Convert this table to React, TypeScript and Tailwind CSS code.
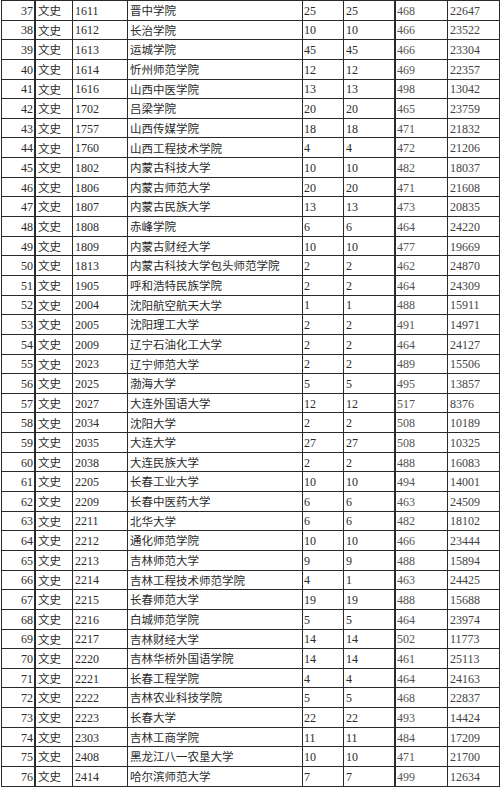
const rows: [number, string, string, string, string, string][] = [
  [37, "1611", "晋中学院", "25", "25", "468", "22647"],
  [38, "1612", "长治学院", "10", "10", "466", "23522"],
  [39, "1613", "运城学院", "45", "45", "466", "23304"],
  [40, "1614", "忻州师范学院", "12", "12", "469", "22357"],
  [41, "1616", "山西中医学院", "13", "13", "498", "13042"],
  [42, "1702", "吕梁学院", "20", "20", "465", "23759"],
  [43, "1757", "山西传媒学院", "18", "18", "471", "21832"],
  [44, "1760", "山西工程技术学院", "4", "4", "472", "21206"],
  [45, "1802", "内蒙古科技大学", "10", "10", "482", "18037"],
  [46, "1806", "内蒙古师范大学", "20", "20", "471", "21608"],
  [47, "1807", "内蒙古民族大学", "13", "13", "473", "20835"],
  [48, "1808", "赤峰学院", "6", "6", "464", "24220"],
  [49, "1809", "内蒙古财经大学", "10", "10", "477", "19669"],
  [50, "1813", "内蒙古科技大学包头师范学院", "2", "2", "462", "24870"],
  [51, "1905", "呼和浩特民族学院", "2", "2", "464", "24309"],
  [52, "2004", "沈阳航空航天大学", "1", "1", "488", "15911"],
  [53, "2005", "沈阳理工大学", "2", "2", "491", "14971"],
  [54, "2009", "辽宁石油化工大学", "2", "2", "464", "24127"],
  [55, "2023", "辽宁师范大学", "2", "2", "489", "15506"],
  [56, "2025", "渤海大学", "5", "5", "495", "13857"],
  [57, "2027", "大连外国语大学", "12", "12", "517", "8376"],
  [58, "2034", "沈阳大学", "2", "2", "508", "10189"],
  [59, "2035", "大连大学", "27", "27", "508", "10325"],
  [60, "2038", "大连民族大学", "2", "2", "488", "16083"],
  [61, "2205", "长春工业大学", "10", "10", "494", "14001"],
  [62, "2209", "长春中医药大学", "6", "6", "463", "24509"],
  [63, "2211", "北华大学", "6", "6", "482", "18102"],
  [64, "2212", "通化师范学院", "10", "10", "466", "23444"],
  [65, "2213", "吉林师范大学", "9", "9", "488", "15894"],
  [66, "2214", "吉林工程技术师范学院", "4", "1", "463", "24425"],
  [67, "2215", "长春师范大学", "19", "19", "488", "15688"],
  [68, "2216", "白城师范学院", "5", "5", "464", "23974"],
  [69, "2217", "吉林财经大学", "14", "14", "502", "11773"],
  [70, "2220", "吉林华桥外国语学院", "14", "14", "461", "25113"],
  [71, "2221", "长春工程学院", "4", "4", "464", "24163"],
  [72, "2222", "吉林农业科技学院", "5", "5", "468", "22837"],
  [73, "2223", "长春大学", "22", "22", "493", "14424"],
  [74, "2303", "吉林工商学院", "11", "11", "484", "17209"],
  [75, "2408", "黑龙江八一农垦大学", "10", "10", "471", "21700"],
  [76, "2414", "哈尔滨师范大学", "7", "7", "499", "12634"],
] as any;

const num = "font-['Liberation_Serif','Noto_Sans_CJK_SC',serif] text-[12px]";
const cjk = "font-['Noto_Sans_CJK_SC',serif] text-[11.5px]";
const cell = "border-b border-r border-[#2a2a2a] flex items-center overflow-hidden whitespace-nowrap text-[#2b2b2b] leading-none pt-px";

export default function App() {
  return (
    <div className="w-[500px] h-[788px] bg-white overflow-hidden pl-px">
      <div className="grid grid-cols-[34px_37px_55px_175px_41px_52px_52px_52px] auto-rows-[19.65px] border-t border-l border-[#2a2a2a] w-[499px]">
        {rows.map((r: any) => (
          <Row key={r[0]} r={r} />
        ))}
      </div>
    </div>
  );
}

function Row({ r }: { r: any[] }) {
  const [n, code, name, a, b, score, rank] = r;
  return (
    <>
      <div className={`${cell} ${num} justify-end pr-px border-r-2`}>{n}</div>
      <div className={`${cell} ${cjk} pl-[2px]`}>文史</div>
      <div className={`${cell} ${num} pl-[2px]`}>{code}</div>
      <div className={`${cell} ${cjk} pl-[2px]`}>{name}</div>
      <div className={`${cell} ${num} pl-px`}>{a}</div>
      <div className={`${cell} ${num} pl-[2px] border-r-2`}>{b}</div>
      <div className={`${cell} ${num} pl-px text-[#555]`}>{score}</div>
      <div className={`${cell} ${num} pl-[2px] text-[#444]`}>{rank}</div>
    </>
  );
}
